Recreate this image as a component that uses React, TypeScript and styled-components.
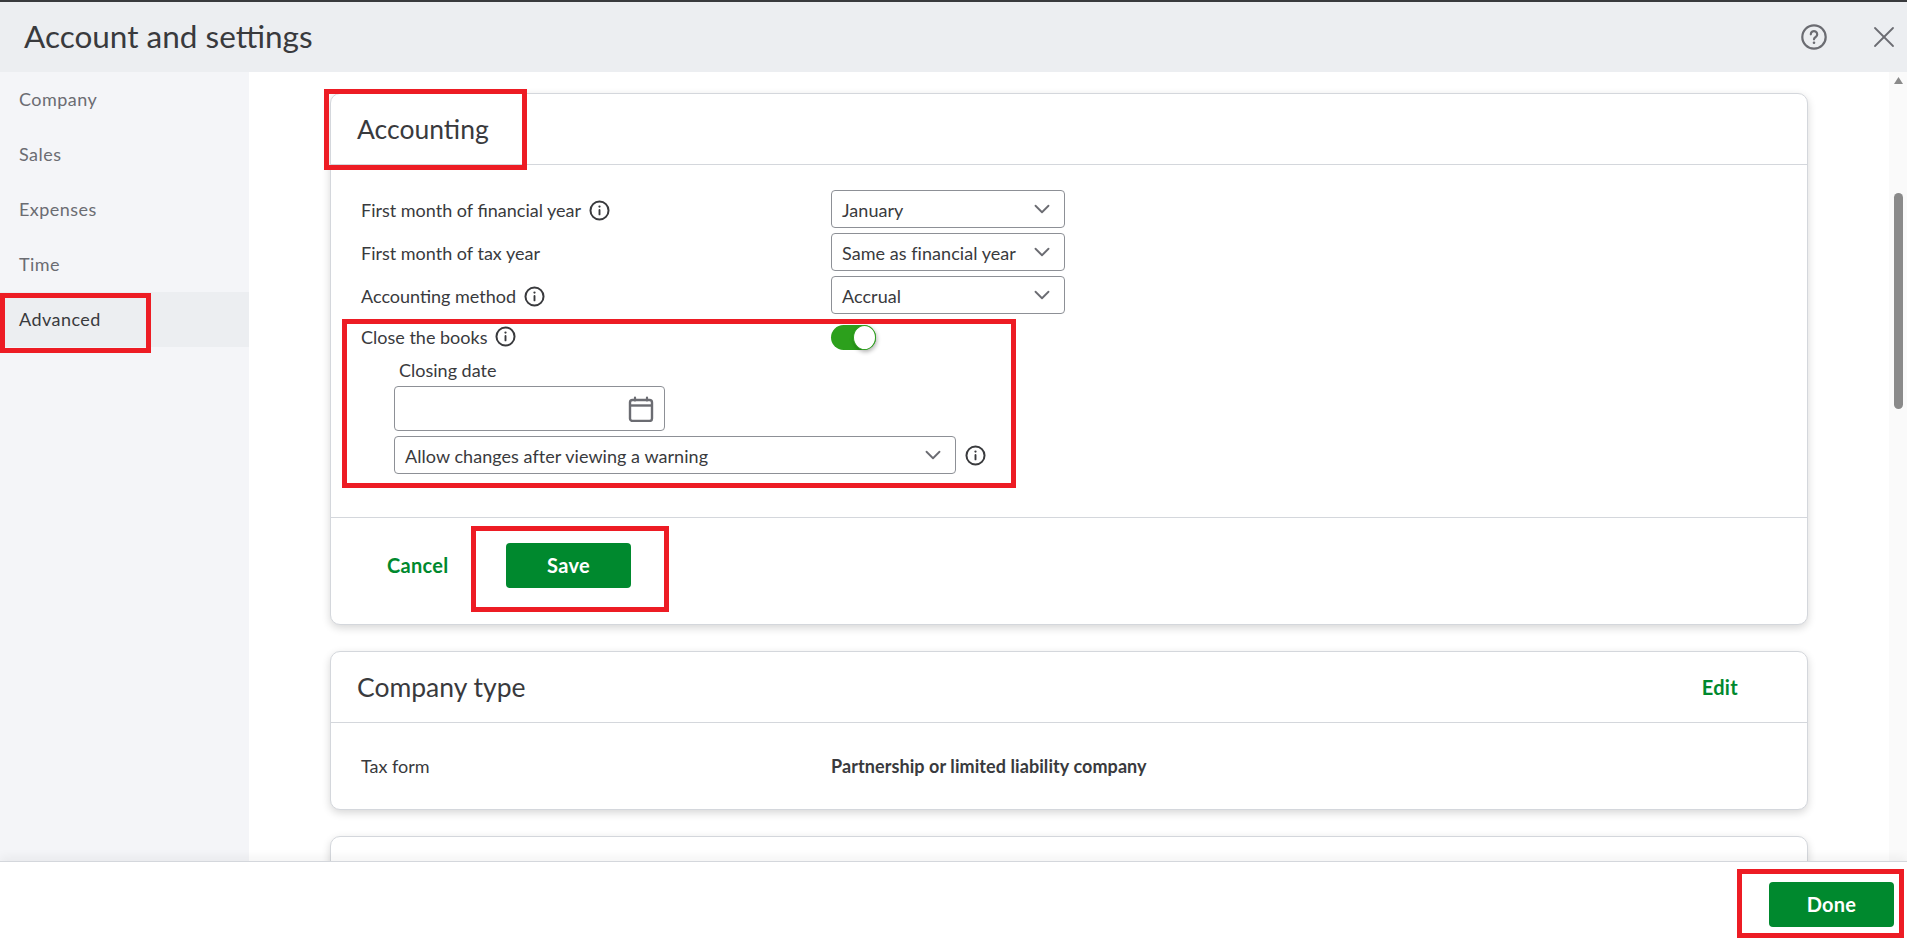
import React from "react";
import styled, { createGlobalStyle } from "styled-components";
import { ChevronDown, X } from "lucide-react";

const Global = createGlobalStyle`
  html, body { margin: 0; padding: 0; height: 100%; background: #fff; }
  #root { height: 100%; }
  * { box-sizing: border-box; }
  body { font-family: Lato, "Open Sans", "Liberation Sans", sans-serif; color: #393a3d; }
`;

const Page = styled.div`
  position: relative;
  height: 939px;
  display: flex;
  flex-direction: column;
  overflow: hidden;
`;
const Header = styled.header`
  height: 72px;
  flex: none;
  background: #eceef1;
  border-top: 2px solid #393a3d;
  display: flex;
  align-items: center;
  padding: 0 5px 0 24px;
`;
const Title = styled.h1`
  flex: 1;
  margin: 0 0 2px;
  font-size: 31.5px;
  font-weight: 400;
  color: #393a3d;
`;
const HeaderIcons = styled.div`
  display: flex;
  align-items: center;
  gap: 39px;
  color: #6b6c72;
`;
const Body = styled.div`
  flex: 1;
  min-height: 0;
  display: flex;
`;
const Sidebar = styled.nav`
  width: 249px;
  flex: none;
  background: #f4f5f8;
`;
const NavItem = styled.div<{ $active?: boolean }>`
  height: 55px;
  display: flex;
  align-items: center;
  padding: 0 0 1px 19px;
  font-size: 18px;
  letter-spacing: 0.45px;
  color: ${(p) => (p.$active ? "#393a3d" : "#6b6c72")};
  background: ${(p) => (p.$active ? "#eceef1" : "transparent")};
`;
const Main = styled.main`
  flex: 1;
  min-width: 0;
  padding: 21px 81px 0;
  display: flex;
  flex-direction: column;
  gap: 26px;
  overflow: hidden;
`;
const Card = styled.section`
  flex: none;
  background: #fff;
  border: 1px solid #d4d7dc;
  border-radius: 10px;
  box-shadow: 0 3px 8px rgba(0, 0, 0, 0.16);
`;
const CardHeader = styled.div`
  height: 71px;
  display: flex;
  align-items: center;
  justify-content: space-between;
  padding: 0 69px 1px 26px;
  border-bottom: 1px solid #d4d7dc;
`;
const CardTitle = styled.h2`
  margin: 0;
  font-size: 26.5px;
  font-weight: 400;
  color: #393a3d;
`;
const EditLink = styled.a`
  font-size: 20px;
  font-weight: 700;
  letter-spacing: 0.3px;
  color: #00892e;
`;
const Form = styled.div`
  padding: 25px 0 43px 30px;
  display: flex;
  flex-direction: column;
`;
const Row = styled.div`
  display: flex;
  align-items: center;
  margin-bottom: 5px;
`;
const CloseRow = styled(Row)`
  margin: 6px 0 0;
  height: 25px;
`;
const Label = styled.div`
  width: 470px;
  flex: none;
  display: flex;
  align-items: center;
  gap: 8px;
  padding-top: 2px;
  font-size: 18px;
  color: #393a3d;
`;
const CloseLabel = styled(Label)`
  padding: 0 0 2px;
`;
const SelectBox = styled.div<{ $width: number }>`
  width: ${(p) => p.$width}px;
  height: 38px;
  flex: none;
  border: 1px solid #8d9096;
  border-radius: 4px;
  display: flex;
  align-items: center;
  justify-content: space-between;
  padding: 0 9px 0 10px;
  font-size: 18px;
  color: #393a3d;
  background: #fff;
  svg { color: #6b6c72; flex: none; }
`;
const SelectText = styled.span`
  padding-top: 2px;
  letter-spacing: 0.05px;
`;
const Toggle = styled.div`
  width: 45px;
  height: 25px;
  border-radius: 13px;
  background: #2ca01c;
  display: flex;
  justify-content: flex-end;
  align-items: center;
`;
const Knob = styled.div`
  width: 23px;
  height: 25px;
  border-radius: 50%;
  background: #fff;
  border: 1px solid #2ca01c;
  box-shadow: 1px 2px 4px rgba(0, 0, 0, 0.3);
`;
const Nested = styled.div`
  padding-left: 33px;
  display: flex;
  flex-direction: column;
`;
const NestedLabel = styled.div`
  font-size: 18px;
  line-height: 22px;
  margin: 9px 0 5px 5px;
  color: #393a3d;
`;
const DateBox = styled.div`
  width: 271px;
  height: 45px;
  border: 1px solid #8d9096;
  border-radius: 4px;
  display: flex;
  align-items: center;
  justify-content: flex-end;
  padding-right: 10px;
  margin-bottom: 5px;
  color: #6b6c72;
`;
const WarningRow = styled.div`
  display: flex;
  align-items: center;
  gap: 9px;
`;
const CardFooter = styled.div`
  height: 107px;
  padding: 25px 0 0 56px;
  display: flex;
  align-items: flex-start;
  gap: 57px;
  border-top: 1px solid #d4d7dc;
`;
const CancelLink = styled.a`
  width: 62px;
  line-height: 45px;
  font-size: 20px;
  font-weight: 700;
  letter-spacing: 0.3px;
  white-space: nowrap;
  color: #00892e;
`;
const GreenButton = styled.button<{ $width: number }>`
  width: ${(p) => p.$width}px;
  height: 45px;
  border: 0;
  border-radius: 4px;
  padding: 0 0 2px;
  background: #00892e;
  color: #fff;
  font-family: inherit;
  font-size: 20px;
  font-weight: 700;
  letter-spacing: 0.3px;
`;
const InfoRow = styled.div`
  height: 86px;
  padding: 0 0 0 30px;
  display: flex;
  align-items: center;
  font-size: 18px;
`;
const InfoLabel = styled.div`
  width: 470px;
  color: #393a3d;
`;
const InfoValue = styled.div`
  font-weight: 700;
  letter-spacing: 0.08px;
  color: #393a3d;
`;
const EmptyCard = styled(Card)`
  height: 120px;
`;
const Scrollbar = styled.div`
  width: 18px;
  flex: none;
  background: #fafafa;
  display: flex;
  flex-direction: column;
  align-items: center;
  padding-top: 5px;
`;
const ScrollThumb = styled.div`
  width: 9px;
  height: 216px;
  margin-top: 109px;
  border-radius: 5px;
  background: #8a8a8a;
`;
const Footer = styled.footer`
  height: 78px;
  flex: none;
  background: #fff;
  border-top: 1px solid #d4d7dc;
  box-shadow: 0 -4px 10px rgba(0, 0, 0, 0.05);
  display: flex;
  justify-content: flex-end;
  padding: 20px 13px 0 0;
  position: relative;
`;
const Callout = styled.div<{ $x: number; $y: number; $w: number; $h: number }>`
  position: absolute;
  left: ${(p) => p.$x}px;
  top: ${(p) => p.$y}px;
  width: ${(p) => p.$w}px;
  height: ${(p) => p.$h}px;
  border: 5px solid #ed1c24;
  pointer-events: none;
`;

const InfoIcon = () => (
  <svg width="21" height="21" viewBox="0 0 20 20" fill="none" style={{ flex: "none" }}>
    <circle cx="10" cy="10" r="8.6" stroke="#393a3d" strokeWidth="1.9" />
    <circle cx="10" cy="6.3" r="1.1" fill="#393a3d" />
    <rect x="9.1" y="8.6" width="1.8" height="6" rx=".9" fill="#393a3d" />
  </svg>
);
const HelpIcon = () => (
  <svg width="26" height="26" viewBox="0 0 26 26" fill="none">
    <circle cx="13" cy="13" r="11.7" stroke="#6b6c72" strokeWidth="2.2" />
    <path d="M9.8 10.3a3.2 3.2 0 1 1 4.9 2.7c-1.1.7-1.7 1.2-1.7 2.3" stroke="#6b6c72" strokeWidth="2.2" strokeLinecap="round" />
    <circle cx="13" cy="18.8" r="1.3" fill="#6b6c72" />
  </svg>
);
const CalendarIcon = () => (
  <svg width="26" height="26" viewBox="0 0 26 26" fill="none">
    <rect x="2" y="4" width="22" height="21" rx="2.5" stroke="#6b6c72" strokeWidth="2.4" />
    <path d="M2 9.5h22" stroke="#6b6c72" strokeWidth="2.4" />
    <path d="M7 1.5v3M19 1.5v3" stroke="#6b6c72" strokeWidth="2.2" strokeLinecap="round" />
  </svg>
);
const ScrollUp = () => (
  <svg width="9" height="7" viewBox="0 0 9 7">
    <path d="M4.5 0 9 7H0z" fill="#8a8a8a" />
  </svg>
);

const Chevron = () => <ChevronDown size={26} strokeWidth={1.7} />;

export default function App() {
  return (
    <Page>
      <Global />
      <Header>
        <Title>Account and settings</Title>
        <HeaderIcons>
          <HelpIcon />
          <X size={36} strokeWidth={1.2} />
        </HeaderIcons>
      </Header>
      <Body>
        <Sidebar>
          <NavItem>Company</NavItem>
          <NavItem>Sales</NavItem>
          <NavItem>Expenses</NavItem>
          <NavItem>Time</NavItem>
          <NavItem $active>Advanced</NavItem>
        </Sidebar>
        <Main>
          <Card>
            <CardHeader>
              <CardTitle>Accounting</CardTitle>
            </CardHeader>
            <Form>
              <Row>
                <Label>First month of financial year <InfoIcon /></Label>
                <SelectBox $width={234}><SelectText>January</SelectText> <Chevron /></SelectBox>
              </Row>
              <Row>
                <Label>First month of tax year</Label>
                <SelectBox $width={234}><SelectText>Same as financial year</SelectText> <Chevron /></SelectBox>
              </Row>
              <Row>
                <Label>Accounting method <InfoIcon /></Label>
                <SelectBox $width={234}><SelectText>Accrual</SelectText> <Chevron /></SelectBox>
              </Row>
              <CloseRow>
                <CloseLabel>Close the books <InfoIcon /></CloseLabel>
                <Toggle><Knob /></Toggle>
              </CloseRow>
              <Nested>
                <NestedLabel>Closing date</NestedLabel>
                <DateBox><CalendarIcon /></DateBox>
                <WarningRow>
                  <SelectBox $width={562}><SelectText>Allow changes after viewing a warning</SelectText> <Chevron /></SelectBox>
                  <InfoIcon />
                </WarningRow>
              </Nested>
            </Form>
            <CardFooter>
              <CancelLink>Cancel</CancelLink>
              <GreenButton $width={125}>Save</GreenButton>
            </CardFooter>
          </Card>
          <Card>
            <CardHeader>
              <CardTitle>Company type</CardTitle>
              <EditLink>Edit</EditLink>
            </CardHeader>
            <InfoRow>
              <InfoLabel>Tax form</InfoLabel>
              <InfoValue>Partnership or limited liability company</InfoValue>
            </InfoRow>
          </Card>
          <EmptyCard />
        </Main>
        <Scrollbar>
          <ScrollUp />
          <ScrollThumb />
        </Scrollbar>
      </Body>
      <Footer>
        <GreenButton $width={125}>Done</GreenButton>
      </Footer>
      <Callout $x={324} $y={89} $w={203} $h={81} />
      <Callout $x={0} $y={293} $w={151} $h={60} />
      <Callout $x={342} $y={319} $w={674} $h={169} />
      <Callout $x={471} $y={526} $w={198} $h={86} />
      <Callout $x={1737} $y={869} $w={167} $h={69} />
    </Page>
  );
}
